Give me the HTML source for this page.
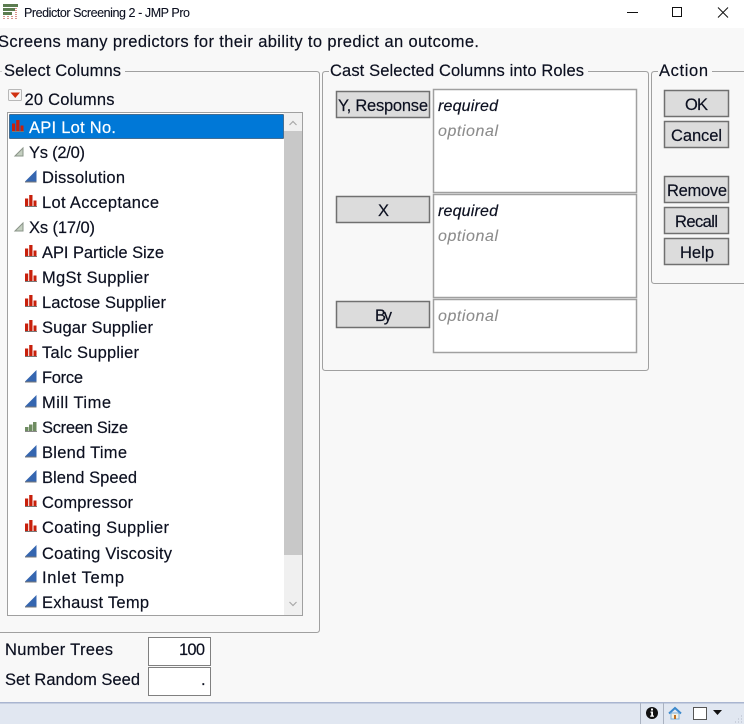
<!DOCTYPE html>
<html><head><meta charset="utf-8"><title>Predictor Screening 2 - JMP Pro</title>
<style>
html,body{margin:0;padding:0;background:#f8f8f8;width:744px;height:724px;overflow:hidden}
svg{display:block}
text{font-family:"Liberation Sans",sans-serif;font-size:16.5px;fill:#0c1020;stroke:#0c1020;stroke-width:.18}
.i{font-style:italic;font-size:16px}
.g{fill:#8c8c8c;stroke:#8c8c8c;stroke-width:.1}
.s{fill:#fff;stroke:#fff}
.b{fill:#dcdcdc;stroke:#707070;stroke-width:1.5}
.w{fill:#fff;stroke:#a0a0a0;stroke-width:1.5}
.f{fill:none;stroke:#a0a0a0;stroke-width:1}
</style></head><body>
<svg width="744" height="724" viewBox="0 0 744 724" xmlns="http://www.w3.org/2000/svg">
<defs>
<g id="n"><path d="M0 9.500 L11.500 -2 V9.500 Z" fill="#3566b0"/><path d="M0 10 H11.500" stroke="#777" stroke-width="1"/></g>
<g id="r"><path d="M0 1.500H3.200V9H0ZM4.200 -2H7.500V9H4.200ZM8.500 3.500H11.500V9H8.500Z" fill="#c8200c"/><path d="M0 9.500H12" stroke="#777" stroke-width="1"/></g>
<g id="o"><path d="M0 5H3.500V9H0ZM4 2.500H7.500V9H4ZM8 0H11.500V9H8Z" fill="#6f8c62"/><path d="M0 9.500H12" stroke="#888" stroke-width="1"/></g>
<path id="t" d="M0 9 L8 1 V9 Z" fill="#c4cfc0" stroke="#8a9488" stroke-width="1"/>
</defs>

<!-- title bar -->
<rect width="744" height="28" fill="#fff"/>
<path d="M3 4H18V7H3ZM3 8H15V11H3ZM3 12H12V15H3Z" fill="#5c7c50"/>
<path d="M4 16V19M8 16V19M12 16V19M16 8V19" stroke="#b02818" stroke-width="1" stroke-dasharray="1 1"/>
<text x="24" y="17" style="font-size:12.500px;stroke-width:.1" textLength="166">Predictor Screening 2 - JMP Pro</text>
<path d="M627 12.500H638" stroke="#111" stroke-width="1"/>
<rect x="672.500" y="7.500" width="9" height="9" fill="none" stroke="#111" stroke-width="1"/>
<path d="M718 7.500L728 17.500M728 7.500L718 17.500" stroke="#111" stroke-width="1"/>

<text x="-2" y="47" textLength="481">Screens many predictors for their ability to predict an outcome.</text>

<!-- Group frames -->
<path class="f" d="M0.500 71.500H1.500M125 71.500H316.500q3 0 3 3V629.500q0 3 -3 3H0"/>
<text x="4" y="76" textLength="117">Select Columns</text>
<path class="f" d="M329 71.500H325.500q-3 0 -3 3V367.500q0 3 3 3H645.500q3 0 3 -3V74.500q0 -3 -3 -3H588"/>
<text x="330" y="76" textLength="254">Cast Selected Columns into Roles</text>
<path class="f" d="M658 71.500H654.500q-3 0 -3 3V280.500q0 3 3 3H744M712 71.500H744"/>
<text x="659" y="76" textLength="49">Action</text>

<!-- 20 columns -->
<rect x="8.500" y="89.500" width="13" height="11" rx="1" fill="#f6f6f6" stroke="#b8b8b8"/>
<path d="M10.500 92.500H20L15.250 98Z" fill="#d03010"/>
<text x="24.500" y="105" textLength="90">20 Columns</text>

<!-- list -->
<rect x="7.500" y="112.500" width="295" height="503" fill="#fff" stroke="#a0a0a0"/>
<rect x="284" y="113" width="18" height="502" fill="#f0f0f0"/>
<rect x="284" y="131" width="18" height="424" fill="#c8c8c8"/>
<path d="M289.500 125L293 121.500L296.500 125" fill="none" stroke="#a8a8a8" stroke-width="1.200"/>
<path d="M289.500 602L293 605.500L296.500 602" fill="none" stroke="#a8a8a8" stroke-width="1.200"/>
<rect x="9.500" y="114.500" width="274" height="24" fill="#0078d7" stroke="#08203c" stroke-width="1" stroke-dasharray="1 1"/>

<use href="#r" x="12" y="122"/><text class="s" x="29" y="133" textLength="87">API Lot No.</text>
<use href="#t" x="15" y="147"/><text x="29" y="158" textLength="56">Ys (2/0)</text>
<use href="#n" x="25" y="172"/><text x="42" y="183" textLength="83">Dissolution</text>
<use href="#r" x="25" y="197"/><text x="42" y="208" textLength="117">Lot Acceptance</text>
<use href="#t" x="15" y="222"/><text x="29" y="233" textLength="66">Xs (17/0)</text>
<use href="#r" x="25" y="247"/><text x="42" y="258" textLength="122">API Particle Size</text>
<use href="#r" x="25" y="272"/><text x="42" y="283" textLength="107">MgSt Supplier</text>
<use href="#r" x="25" y="297"/><text x="42" y="308" textLength="124">Lactose Supplier</text>
<use href="#r" x="25" y="322"/><text x="42" y="333" textLength="111">Sugar Supplier</text>
<use href="#r" x="25" y="347"/><text x="42" y="358" textLength="97">Talc Supplier</text>
<use href="#n" x="25" y="372"/><text x="42" y="383" textLength="41">Force</text>
<use href="#n" x="25" y="397"/><text x="42" y="408" textLength="69">Mill Time</text>
<use href="#o" x="25" y="422"/><text x="42" y="433" textLength="86">Screen Size</text>
<use href="#n" x="25" y="447"/><text x="42" y="458" textLength="85">Blend Time</text>
<use href="#n" x="25" y="472"/><text x="42" y="483" textLength="95">Blend Speed</text>
<use href="#r" x="25" y="497"/><text x="42" y="508" textLength="91">Compressor</text>
<use href="#r" x="25" y="522"/><text x="42" y="533" textLength="127">Coating Supplier</text>
<use href="#n" x="25" y="547"/><text x="42" y="559" textLength="130">Coating Viscosity</text>
<use href="#n" x="25" y="572"/><text x="42" y="583" textLength="82">Inlet Temp</text>
<use href="#n" x="25" y="597"/><text x="42" y="608" textLength="107">Exhaust Temp</text>

<!-- bottom inputs -->
<text x="5" y="655" textLength="108">Number Trees</text>
<text x="5" y="685" textLength="135">Set Random Seed</text>
<rect x="148.500" y="637.500" width="62" height="28" fill="#fff" stroke="#808080"/>
<rect x="148.500" y="667.500" width="62" height="28" fill="#fff" stroke="#808080"/>
<text x="179" y="655" textLength="26">100</text>
<text x="201" y="685">.</text>

<!-- role buttons -->
<rect class="b" x="336.500" y="91.500" width="93" height="26"/>
<rect class="b" x="336.500" y="196.500" width="93" height="26"/>
<rect class="b" x="336.500" y="301.500" width="93" height="26"/>
<text x="338" y="111" textLength="90">Y, Response</text>
<text x="378" y="216" textLength="10">X</text>
<text x="375" y="321" textLength="17">By</text>

<rect class="w" x="433.500" y="89.500" width="203" height="103"/>
<rect class="w" x="433.500" y="194.500" width="203" height="103"/>
<rect class="w" x="433.500" y="299.500" width="203" height="53"/>
<text class="i" x="438" y="111" textLength="60">required</text>
<text class="i g" x="438" y="136" textLength="60">optional</text>
<text class="i" x="438" y="216" textLength="60">required</text>
<text class="i g" x="438" y="241" textLength="60">optional</text>
<text class="i g" x="438" y="321" textLength="60">optional</text>

<!-- action buttons -->
<rect class="b" x="664.500" y="90.500" width="64" height="26"/>
<rect class="b" x="664.500" y="121.500" width="64" height="26"/>
<rect class="b" x="664.500" y="176.500" width="64" height="26"/>
<rect class="b" x="664.500" y="207.500" width="64" height="26"/>
<rect class="b" x="664.500" y="238.500" width="64" height="26"/>
<text x="685" y="110" textLength="23">OK</text>
<text x="671" y="141" textLength="51">Cancel</text>
<text x="667" y="196" textLength="60">Remove</text>
<text x="675" y="227" textLength="43">Recall</text>
<text x="680" y="258" textLength="34">Help</text>

<!-- status bar -->
<rect x="0" y="703" width="744" height="21" fill="#e1e7f1"/>
<rect x="0" y="702" width="744" height="1.500" fill="#a9b5d0"/>
<path d="M640.500 703V724M663.500 703V724" stroke="#aab2c0" stroke-width="1"/>
<circle cx="652" cy="713" r="6" fill="#111"/>
<path d="M651 708.500h2v2h-2zM650.500 711.500h2.500v4h1v1.200h-3.800v-1.200h1v-2.800h-.7z" fill="#fff"/>
<path d="M669 713.500L675 708L681 713.500" fill="none" stroke="#3a88cc" stroke-width="2"/>
<path d="M671 713V719H679V713Z" fill="#f4f0e0" stroke="#7ab0dc" stroke-width="1"/>
<rect x="674" y="715" width="2" height="4" fill="#c07020"/>
<rect x="693.500" y="707.500" width="13" height="12" fill="#fff" stroke="#555"/>
<path d="M713 710H722L717.500 715Z" fill="#111"/>
<path d="M741 722h1M738 722h1M741 719h1M735 722h1M738 719h1M741 716h1" stroke="#b4bac6" stroke-width="1"/>
</svg>
</body></html>
